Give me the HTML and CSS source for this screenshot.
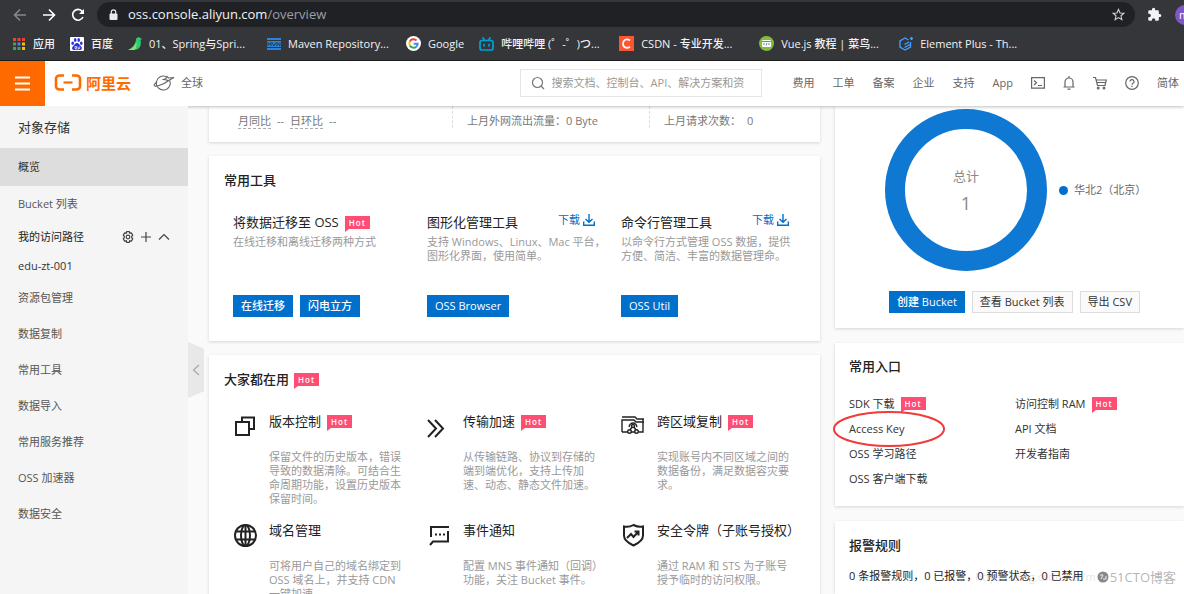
FILE: index.html
```html
<!DOCTYPE html>
<html lang="zh-CN">
<head>
<meta charset="utf-8">
<meta name="viewport" content="width=device-width, initial-scale=1">
<title>对象存储 - 概览</title>
<link rel="stylesheet" href="styles.css">
</head>
<body>
<div class="browser">
  <div class="toolbar">
    <button class="tool" aria-label="后退"><svg class="dim" width="14" height="14" viewBox="0 0 14 14"><path d="M13 7H2M7 1.5L1.5 7L7 12.5"/></svg></button>
    <button class="tool" aria-label="前进"><svg width="14" height="14" viewBox="0 0 14 14"><path d="M1 7H12M7 1.5L12.5 7L7 12.5"/></svg></button>
    <button class="tool" aria-label="刷新"><svg width="14" height="14" viewBox="0 0 14 14"><path d="M12 9A5.4 5.4 0 1 1 11.3 3.4"/><path d="M13 1V6H8z" fill="#fff" stroke="none"/></svg></button>
    <div class="address">
      <svg width="9" height="12" viewBox="0 0 9 12"><rect x="0.5" y="4.5" width="8" height="6.5" rx="1" fill="#e8eaed"/><path d="M2.3 5V3a2.2 2.2 0 0 1 4.4 0V5" fill="none" stroke="#e8eaed" stroke-width="1.2"/></svg>
      <div class="url" role="textbox" aria-label="地址">oss.console.aliyun.com<span>/overview</span></div>
      <button class="tool" aria-label="收藏"><svg width="13" height="13" viewBox="0 0 24 24"><path d="M12 2.5l2.9 6.6 7.1.6-5.4 4.7 1.6 7L12 17.7l-6.200 3.700 1.600-7L2 9.700l7.100-.6z" stroke="#d5d7da" stroke-width="2"/></svg></button>
    </div>
    <button class="tool ext" aria-label="扩展程序"><svg width="15" height="15" viewBox="0 0 24 24"><path fill="#f1f3f4" stroke="none" d="M20.500 11H19V7a2 2 0 0 0-2-2h-4V3.500a2.500 2.500 0 0 0-5 0V5H4a2 2 0 0 0-2 2v3.800h1.500a2.700 2.700 0 0 1 0 5.400H2V20a2 2 0 0 0 2 2h3.800v-1.500a2.700 2.700 0 0 1 5.400 0V22H17a2 2 0 0 0 2-2v-4h1.500a2.500 2.500 0 0 0 0-5z"/></svg></button>
    <button class="avatar" aria-label="用户">m</button>
  </div>
  <nav class="bookmarks">
    <a href="#"><svg width="14" height="14" viewBox="0 0 14 14"><path fill="#ea4335" d="M1 1h3v3H1zM5.500 1h3v3h-3zM10 1h3v3h-3z"/><path fill="#34a853" d="M1 5.500h3v3H1zM1 10h3v3H1zM5.500 10h3v3h-3z"/><path fill="#4285f4" d="M5.500 5.500h3v3h-3z"/><path fill="#fbbc05" d="M10 5.500h3v3h-3zM10 10h3v3h-3z"/></svg><span>应用</span></a>
    <a href="#"><svg width="14" height="14" viewBox="0 0 14 14"><rect width="14" height="14" rx="1" fill="#fff"/><g fill="#2932e1"><ellipse cx="2.700" cy="6.300" rx="1.300" ry="1.800"/><ellipse cx="5.200" cy="3" rx="1.300" ry="1.900"/><ellipse cx="8.700" cy="3" rx="1.300" ry="1.900"/><ellipse cx="11.300" cy="6.300" rx="1.300" ry="1.800"/><path d="M7 6c2 0 2.500 2 4 3.200 2 2 .5 4-1.500 3.800-1.700-.3-3.300-.3-5 0-2 .2-3.500-1.800-1.500-3.800C4.500 8 5 6 7 6z"/></g><path d="M5 9.500h1.500v2H5zM8 9.500v2h1.700v-2" fill="none" stroke="#fff" stroke-width=".7"/></svg><span>百度</span></a>
    <a href="#"><svg width="14" height="14" viewBox="0 0 14 14"><path fill="#2ecc71" d="M8 3C8 1 9.500 0 11.500.500L14 2l-1.500 1C14 9 11 13 6 13H0C4 11 7 8 8 3z"/><path fill="#8fe36c" d="M8.500 5C7 9 4 12 0 13h6c2-1 3-5 2.500-8z"/></svg><span class="cut">01、Spring与Spri...</span></a>
    <a href="#"><svg width="14" height="14" viewBox="0 0 14 14"><path fill="#2a84dc" d="M0 1h14v2H0zM0 4h14v6H0zM0 11h14v2H0z"/><path d="M1 9V5.500l1.500 2 1.500-2V9M5 5.500L7 9l2-3.500M10 9V5.500L13 9V5.500" stroke="#35363a" fill="none"/></svg><span class="cut">Maven Repository...</span></a>
    <a href="#"><svg width="15" height="15" viewBox="0 0 15 15"><circle cx="7.500" cy="7.500" r="7.500" fill="#fff"/><g fill="none" stroke-width="1.900"><path stroke="#ea4335" d="M10.500 4.500A4.200 4.200 0 0 0 3.800 5.500"/><path stroke="#fbbc05" d="M3.800 5.500a4.200 4.200 0 0 0 0 4"/><path stroke="#34a853" d="M3.800 9.500a4.200 4.200 0 0 0 6.500 1.200"/><path stroke="#4285f4" d="M10.300 10.700a4.200 4.200 0 0 0 1.400-2.900H7.700"/></g></svg><span>Google</span></a>
    <a href="#"><svg width="15" height="14" viewBox="0 0 15 14"><g fill="none" stroke="#00a1d6" stroke-width="1.700" stroke-linecap="round"><rect x="1" y="3.500" width="13" height="9.500" rx="2"/><path d="M4 1l1.500 2M11 1L9.500 3M5 7.500v1.300M10 7.500v1.300"/></g></svg><span class="cut">哔哩哔哩 (゜-゜)つ...</span></a>
    <a href="#"><svg width="15" height="15" viewBox="0 0 15 15"><path fill="#fc5531" d="M0 0h15v15H0z"/><path d="M11 4.500C7.500 2 4 4 4 7.800s3.500 5 7 2.900" fill="none" stroke="#fff" stroke-width="1.800"/></svg><span class="cut">CSDN - 专业开发...</span></a>
    <a href="#"><svg width="15" height="15" viewBox="0 0 15 15"><circle cx="7.500" cy="7.500" r="7.500" fill="#84bd3a"/><rect x="3" y="4" width="9" height="7" rx="1" fill="#fff"/><path d="M3 5.500h9M5.500 7L4.500 8l1 1M9.500 7l1 1-1 1M8 7L7 9.500" fill="none" stroke="#4c6680" stroke-width=".8"/></svg><span class="cut">Vue.js 教程 | 菜鸟...</span></a>
    <a href="#"><svg width="14" height="15" viewBox="0 0 14 15"><g fill="none" stroke="#409eff" stroke-width="1.400"><path d="M11.500 6v5L6 14 1 11V5l5-3 3.500 2M10 6L5.500 8.500M11 8.500l-5.500 3M12.500 1v3M11 2.500h3"/></g></svg><span class="cut">Element Plus - Th...</span></a>
  </nav>
</div>

<header class="topbar">
  <button class="menu" aria-label="菜单"><svg width="15" height="15" viewBox="0 0 15 15"><path d="M0 1.500h15M0 7.500h15M0 13.500h15" stroke="#fff" stroke-width="2.200"/></svg></button>
  <a class="logo" href="#"><svg width="28" height="17" viewBox="0 0 28 17"><path d="M10 1.500H6Q2 1.500 2 5v7q0 3.500 4 3.500h4M18 1.500h4q4 0 4 3.500v7q0 3.500-4 3.500h-4" fill="none" stroke="#ff6a00" stroke-width="2.600"/><path d="M9.500 8.500h9" stroke="#ff6a00" stroke-width="2.200"/></svg><span>阿里云</span></a>
  <button class="region"><svg width="22" height="18" viewBox="0 0 22 18"><g fill="none" stroke="#666" stroke-width="1.100"><path d="M16.800 6.500A7 7 0 1 1 13.500 2.800"/><path d="M4 8C-1 11.500 1 13 6 11.500 11 10 14 8 16.500 6L21 3.500 15.500 4 14 2.500 13 4.500 10.500 5.500 14 6v2.500"/></g></svg><span>全球</span></button>
  <label class="search"><svg width="14" height="14" viewBox="0 0 14 14"><circle cx="6.500" cy="6.500" r="5" fill="none" stroke="#777" stroke-width="1.200"/><path d="M10 10l3 3" stroke="#777" stroke-width="1.200"/></svg><input type="text" aria-label="搜索" placeholder="搜索文档、控制台、API、解决方案和资"></label>
  <nav class="topnav">
    <a href="#">费用</a><a href="#">工单</a><a href="#">备案</a><a href="#">企业</a><a href="#">支持</a><a href="#">App</a>
    <button aria-label="终端"><svg width="14" height="14" viewBox="0 0 14 14"><path d="M.6 1.600h12.800v10.500H.6zM3 4.500l2.500 2.300L3 9M7 9.500h4"/></svg></button>
    <button aria-label="消息"><svg width="12" height="14" viewBox="0 0 12 14"><path d="M6 0v1.500M.5 11h11M2 11V6a4 4 0 0 1 8 0v5M4.500 13.200h3"/></svg></button>
    <button aria-label="购物车"><svg width="14" height="14" viewBox="0 0 14 14"><path d="M0 1.500h2.500L4.500 9.500h7.500L13.300 4H3.200M3.700 6.500h9"/><circle cx="5.200" cy="12" r=".9"/><circle cx="11" cy="12" r=".9"/></svg></button>
    <button aria-label="帮助"><svg width="14" height="14" viewBox="0 0 14 14"><circle cx="7" cy="7" r="6.300"/><path d="M5 5.600a2 2 0 1 1 3 1.700q-1 .5-1 1.500M7 9.800v1.200"/></svg></button>
    <a href="#">简体</a>
  </nav>
</header>

<div class="shell">
  <aside class="sidebar">
    <h1>对象存储</h1>
    <a class="active" href="#">概览</a>
    <a href="#">Bucket 列表</a>
    <div class="paths"><span>我的访问路径</span>
      <button aria-label="设置"><svg width="12" height="12" viewBox="0 0 12 12"><path d="M4.700.7h2.600l.5 1.500 1.600-.3 1.300 2.200L9.700 5.300v1.400l1 1.200-1.300 2.200-1.600-.3-.5 1.500H4.700l-.5-1.500-1.600.3L1.300 7.900l1-1.200V5.300l-1-1.200 1.300-2.200 1.600.3z"/><circle cx="6" cy="6" r="1.800"/></svg></button>
      <button aria-label="添加"><svg width="12" height="12" viewBox="0 0 12 12"><path d="M1 6h10M6 1v10"/></svg></button>
      <button aria-label="收起"><svg width="12" height="12" viewBox="0 0 12 12"><path d="M1 8.500l5-5 5 5"/></svg></button>
    </div>
    <a class="sub" href="#">edu-zt-001</a>
    <a href="#">资源包管理</a>
    <a href="#">数据复制</a>
    <a href="#">常用工具</a>
    <a href="#">数据导入</a>
    <a href="#">常用服务推荐</a>
    <a href="#">OSS 加速器</a>
    <a href="#">数据安全</a>
    <button class="collapse" aria-label="收起侧栏"><svg width="8" height="12" viewBox="0 0 8 12"><path d="M7 1L1.500 6 7 11" fill="none" stroke="#aaa" stroke-width="1.300"/></svg></button>
  </aside>

  <main class="content">
    <div class="column wide">
      <section class="card stats">
        <div><span class="hint">月同比</span><span>--</span><span class="hint">日环比</span><span>--</span></div>
        <div>上月外网流出流量：0 Byte</div>
        <div><span>上月请求次数：</span><span>0</span></div>
      </section>

      <section class="card tools">
        <h2>常用工具</h2>
        <div class="grid">
          <article class="tool-item">
            <header><h3>将数据迁移至 OSS</h3><span class="hot">Hot</span></header>
            <p>在线迁移和离线迁移两种方式</p>
            <footer><button class="btn primary">在线迁移</button><button class="btn primary">闪电立方</button></footer>
          </article>
          <article class="tool-item">
            <header><h3>图形化管理工具</h3><a class="download" href="#">下载<svg width="12" height="12" viewBox="0 0 12 12"><path d="M6 0v8M2.500 5L6 8.300 9.500 5M.7 7.500v3.800h10.600V7.500"/></svg></a></header>
            <p>支持 Windows、Linux、Mac 平台，<br>图形化界面，使用简单。</p>
            <footer><button class="btn primary">OSS Browser</button></footer>
          </article>
          <article class="tool-item">
            <header><h3>命令行管理工具</h3><a class="download" href="#">下载<svg width="12" height="12" viewBox="0 0 12 12"><path d="M6 0v8M2.500 5L6 8.300 9.500 5M.7 7.500v3.800h10.600V7.500"/></svg></a></header>
            <p>以命令行方式管理 OSS 数据，提供<br>方便、简洁、丰富的数据管理命。</p>
            <footer><button class="btn primary">OSS Util</button></footer>
          </article>
        </div>
      </section>

      <section class="card popular">
        <h2>大家都在用<span class="hot">Hot</span></h2>
        <div class="grid">
          <article class="feature">
            <svg width="24" height="24" viewBox="0 0 24 24"><path d="M3 8h13v13H3zM9 8V3.500h12V15h-4"/></svg>
            <div><header><h3>版本控制</h3><span class="hot">Hot</span></header><p>保留文件的历史版本，错误<br>导致的数据清除。可结合生<br>命周期功能，设置历史版本<br>保留时间。</p></div>
          </article>
          <article class="feature">
            <svg width="24" height="24" viewBox="0 0 24 24"><path d="M1 6l8 8.500L1 23M8 6l8 8.500L8 23"/></svg>
            <div><header><h3>传输加速</h3><span class="hot">Hot</span></header><p>从传输链路、协议到存储的<br>端到端优化，支持上传加<br>速、动态、静态文件加速。</p></div>
          </article>
          <article class="feature">
            <svg class="thin" width="24" height="24" viewBox="0 0 24 24"><path d="M1 3h13l2 2h7M1 18V6h12l2 2h8M1 18h6M18 18h4V5"/><path d="M8 13q1-4 4-4t4 4M11 13l-2 3M13 13l2 3M10 18h4"/><circle cx="12" cy="12" r="1.500"/><circle cx="8.500" cy="17.500" r="1.800"/><circle cx="15.500" cy="17.500" r="1.800"/></svg>
            <div><header><h3>跨区域复制</h3><span class="hot">Hot</span></header><p>实现账号内不同区域之间的<br>数据备份，满足数据容灾要<br>求。</p></div>
          </article>
          <article class="feature">
            <svg width="24" height="24" viewBox="0 0 24 24"><circle cx="12.500" cy="12.500" r="10.500"/><ellipse cx="12.500" cy="12.500" rx="4.500" ry="10.500"/><path d="M12.500 2v21M3 8.500h19M3 16.500h19"/></svg>
            <div><header><h3>域名管理</h3></header><p>可将用户自己的域名绑定到<br>OSS 域名上，并支持 CDN<br>一键加速。</p></div>
          </article>
          <article class="feature">
            <svg width="24" height="24" viewBox="0 0 24 24"><path d="M22 4H4v10M3 22l3-3.500h15V8M8 11.500h2M12 11.500h2M16 11.500h2"/></svg>
            <div><header><h3>事件通知</h3></header><p>配置 MNS 事件通知（回调）<br>功能，关注 Bucket 事件。</p></div>
          </article>
          <article class="feature">
            <svg width="24" height="24" viewBox="0 0 24 24"><path d="M12.500 2q5 2.500 9.500 1.500v9c0 4-4 7.500-9.500 10C7 20 3 16.500 3 12.500v-9Q8 4.500 12.500 2zM6 15l4-4 2.500 3 5-5.500M13.500 8.500h4v4"/></svg>
            <div><header><h3>安全令牌（子账号授权）</h3></header><p>通过 RAM 和 STS 为子账号<br>授予临时的访问权限。</p></div>
          </article>
        </div>
      </section>
    </div>

    <div class="column narrow">
      <section class="card buckets">
        <div class="chart">
          <svg width="162" height="162" viewBox="0 0 162 162" role="img" aria-label="总计 1"><circle cx="81" cy="81" r="71" fill="none" stroke="#0f78d2" stroke-width="20"/><text class="chart-label" x="81" y="72">总计</text><text class="chart-value" x="81" y="101">1</text></svg>
          <span class="legend">华北2（北京）</span>
        </div>
        <div class="actions"><button class="btn primary">创建 Bucket</button><button class="btn">查看 Bucket 列表</button><button class="btn">导出 CSV</button></div>
      </section>
      <section class="card links">
        <h2>常用入口</h2>
        <div class="link-grid">
          <a href="#">SDK 下载<span class="hot">Hot</span></a><a href="#">访问控制 RAM<span class="hot">Hot</span></a>
          <a class="marked" href="#">Access Key<svg class="ring" width="112" height="36" viewBox="0 0 112 36"><ellipse cx="56" cy="18" rx="55" ry="17" fill="none" stroke="#f23a3a" stroke-width="2"/></svg></a><a href="#">API 文档</a>
          <a href="#">OSS 学习路径</a><a href="#">开发者指南</a>
          <a href="#">OSS 客户端下载</a>
        </div>
      </section>
      <section class="card alarms">
        <h2>报警规则</h2>
        <p>0 条报警规则，0 已报警，0 预警状态，0 已禁用</p>
      </section>
    </div>
  </main>
</div>
<div class="watermark"><span class="faint">https://blog.csdn.net/m</span><svg width="12" height="12" viewBox="0 0 12 12"><circle cx="6" cy="6" r="5.500" fill="#888"/><path d="M3 4h3L4 8M6 8h3V5" fill="none" stroke="#eee"/></svg><span>51CTO博客</span></div>
</body>
</html>
```
FILE: styles.css
```css
* { box-sizing: border-box; }
body {
  margin: 0;
  height: 100vh;
  overflow: hidden;
  display: flex;
  flex-direction: column;
  position: relative;
  background: #fafafa;
  color: #333;
  font: 11px/14px "Open Sans", "Noto Sans CJK SC", sans-serif;
}
h1, h2, h3, p { margin: 0; }
a { color: inherit; text-decoration: none; }
button { margin: 0; padding: 0; border: 0; background: none; color: inherit; font: inherit; }
svg { display: block; flex: none; }

/* Browser frame */
.browser { flex: none; background: #35363a; color: #f1f3f4; border-bottom: 1px solid #1c1d1f; }
.toolbar { display: flex; align-items: center; height: 29px; padding-left: 13px; overflow: hidden; }
.tool { margin-right: 15px; }
.tool svg { fill: none; stroke: #fff; stroke-width: 1.6; }
.tool svg.dim { stroke: #85878a; }
.address { flex: 1; display: flex; align-items: center; gap: 10px; height: 25px; margin-left: -3px; padding-left: 12px; border-radius: 13px; background: #202124; }
.address .tool { margin-right: 10px; }
.url { flex: 1; padding-bottom: 2px; font-size: 13px; line-height: 18px; }
.url span { color: #9aa0a6; }
.ext { margin: 0 13px 0 12px; }
.avatar { flex: none; width: 20px; height: 20px; margin-right: -11px; border-radius: 10px; background: #7e57c2; color: #fff; text-align: left; padding-left: 4px; line-height: 18px; }
.bookmarks { display: flex; align-items: center; gap: 15px; height: 31px; padding: 0 0 2px 12px; white-space: nowrap; font-weight: 500; }
.bookmarks a { display: flex; align-items: center; gap: 7px; }
.cut { width: 103px; }

/* Console header */
.topbar { flex: none; display: flex; align-items: center; height: 45px; padding: 0 5px 2px 0; position: relative; background: #fff; color: #666; box-shadow: 0 1px 3px rgba(0, 0, 0, .25); white-space: nowrap; }
.menu { display: grid; place-items: center; width: 45px; height: 45px; margin-bottom: -2px; background: #ff6a00; }
.logo { display: flex; align-items: center; gap: 4px; margin-left: 9px; color: #ff6a00; font-size: 15px; font-weight: 700; line-height: 18px; }
.region { display: flex; align-items: center; gap: 6px; margin-left: 22px; }
.search { display: flex; align-items: center; gap: 7px; width: 242px; height: 28px; margin-left: auto; margin-right: 31px; padding-left: 10px; border: 1px solid #e5e5e5; }
.search input { flex: 1; min-width: 0; border: 0; padding: 0; outline: 0; background: none; font: inherit; }
.search input::placeholder { color: #999; }
.topnav { display: flex; align-items: center; gap: 18px; }
.topnav svg { fill: none; stroke: #666; stroke-width: 1.2; }

/* Sidebar */
.shell { flex: 1; min-height: 0; display: flex; }
.sidebar { flex: none; position: relative; width: 188px; background: #f5f5f5; color: #555; }
.sidebar h1 { padding-left: 18px; font-size: 13px; font-weight: 400; line-height: 42px; color: #333; }
.sidebar a { display: block; padding-left: 18px; line-height: 36px; }
.sidebar .active { background: #ddd; color: #333; line-height: 38px; }
.sidebar .sub { line-height: 28px; color: #333; }
.paths { display: flex; align-items: center; gap: 6px; height: 30px; padding: 0 18px; color: #222; }
.paths span { margin-right: auto; }
.paths svg { fill: none; stroke: #444; stroke-width: 1.2; }
.collapse { position: absolute; left: 100%; top: 236px; display: grid; place-items: center; width: 16px; height: 56px; background: #e8e8e8; clip-path: polygon(0 0, 100% 12%, 100% 88%, 0 100%); }

/* Content */
.content { flex: 1; min-width: 0; display: flex; gap: 15px; padding-left: 21px; }
.column { display: flex; flex-direction: column; gap: 14px; min-width: 0; }
.wide { flex: 611; }
.narrow { flex: 349; gap: 15px; }
.card { flex: none; background: #fff; box-shadow: 0 1px 3px rgba(0, 0, 0, .15); white-space: nowrap; }
.card h2 { display: flex; align-items: center; gap: 5px; padding-left: 15px; font-size: 13px; font-weight: 500; line-height: 18px; color: #222; }
.narrow h2 { padding-left: 14px; }
h3 { font-size: 13px; font-weight: 400; line-height: 18px; color: #222; }
.hot { position: relative; align-self: center; height: 13px; padding: 0 4px; background: #ff4d73; color: #fff; font-size: 8px; font-weight: 600; line-height: 13px; letter-spacing: 1px; }
.hot::after { content: ""; position: absolute; left: 0; top: 100%; border-top: 3px solid #ff4d73; border-right: 4px solid transparent; }
.btn { height: 22px; padding: 0 7px; border: 1px solid #ddd; background: #fafafa; color: #333; line-height: 20px; }
.btn.primary { border-color: #0070cc; background: #0070cc; color: #fff; font-weight: 500; }

.stats { display: grid; grid-template-columns: 243fr 197fr 171fr; height: 36px; color: #777; }
.stats div { display: flex; gap: 6px; height: 22px; padding: 8px 0 0 14px; }
.stats div + div { border-left: 1px dashed #ddd; }
.stats div:first-child { padding-left: 29px; }
.stats .hint { height: 15px; border-bottom: 1px dashed #aaa; }

.grid { display: grid; grid-template-columns: repeat(3, minmax(0, 1fr)); padding: 0 5px 0 24px; }
.tools { padding: 15px 0 24px; }
.tools .grid { padding-top: 24px; }
.tool-item { padding-right: 26px; }
.tool-item header, .feature header { display: flex; gap: 6px; }
.card p { color: #999; }
.tool-item p { height: 60px; padding-top: 4px; }
.tool-item footer { display: flex; gap: 7px; margin-top: 4px; }
.download { display: flex; align-items: center; gap: 3px; height: 14px; margin-left: auto; color: #0070cc; }
.download svg { fill: none; stroke: #0070cc; stroke-width: 1.4; }

.popular { padding-top: 15px; }
.popular .grid { padding-top: 24px; row-gap: 15px; }
.feature { display: flex; gap: 12px; }
.feature > svg { margin-top: 2px; fill: none; stroke: #222; stroke-width: 2; }
.feature > svg.thin { stroke-width: 1.4; }
.feature p { padding-top: 20px; }

.buckets { padding: 3px 0 15px; }
.chart { display: flex; align-items: center; gap: 12px; padding-left: 50px; }
.chart text { text-anchor: middle; fill: #888; }
.chart-label { font-size: 13px; }
.chart-value { font-size: 18px; }
.legend { display: flex; align-items: center; gap: 6px; color: #666; }
.legend::before { content: ""; width: 9px; height: 9px; border-radius: 50%; background: #0070cc; }
.actions { display: flex; gap: 7px; padding: 20px 0 0 54px; }
.links { padding: 14px 0 15px; }
.link-grid { display: grid; grid-template-columns: 166fr 169fr; grid-auto-rows: 25px; padding: 16px 0 0 14px; }
.link-grid a { display: flex; align-items: center; gap: 6px; }
.marked { position: relative; }
.ring { position: absolute; left: -16px; top: -5px; }
.alarms { flex: 1; padding-top: 15px; }
.alarms p { padding: 15px 0 0 14px; color: #222; }

.watermark { position: absolute; right: 8px; bottom: 8px; display: flex; align-items: center; gap: 1px; color: rgba(130, 130, 130, .6); font-size: 13px; line-height: 18px; }
.faint { color: rgba(150, 150, 150, .25); font-size: 11px; }
```
